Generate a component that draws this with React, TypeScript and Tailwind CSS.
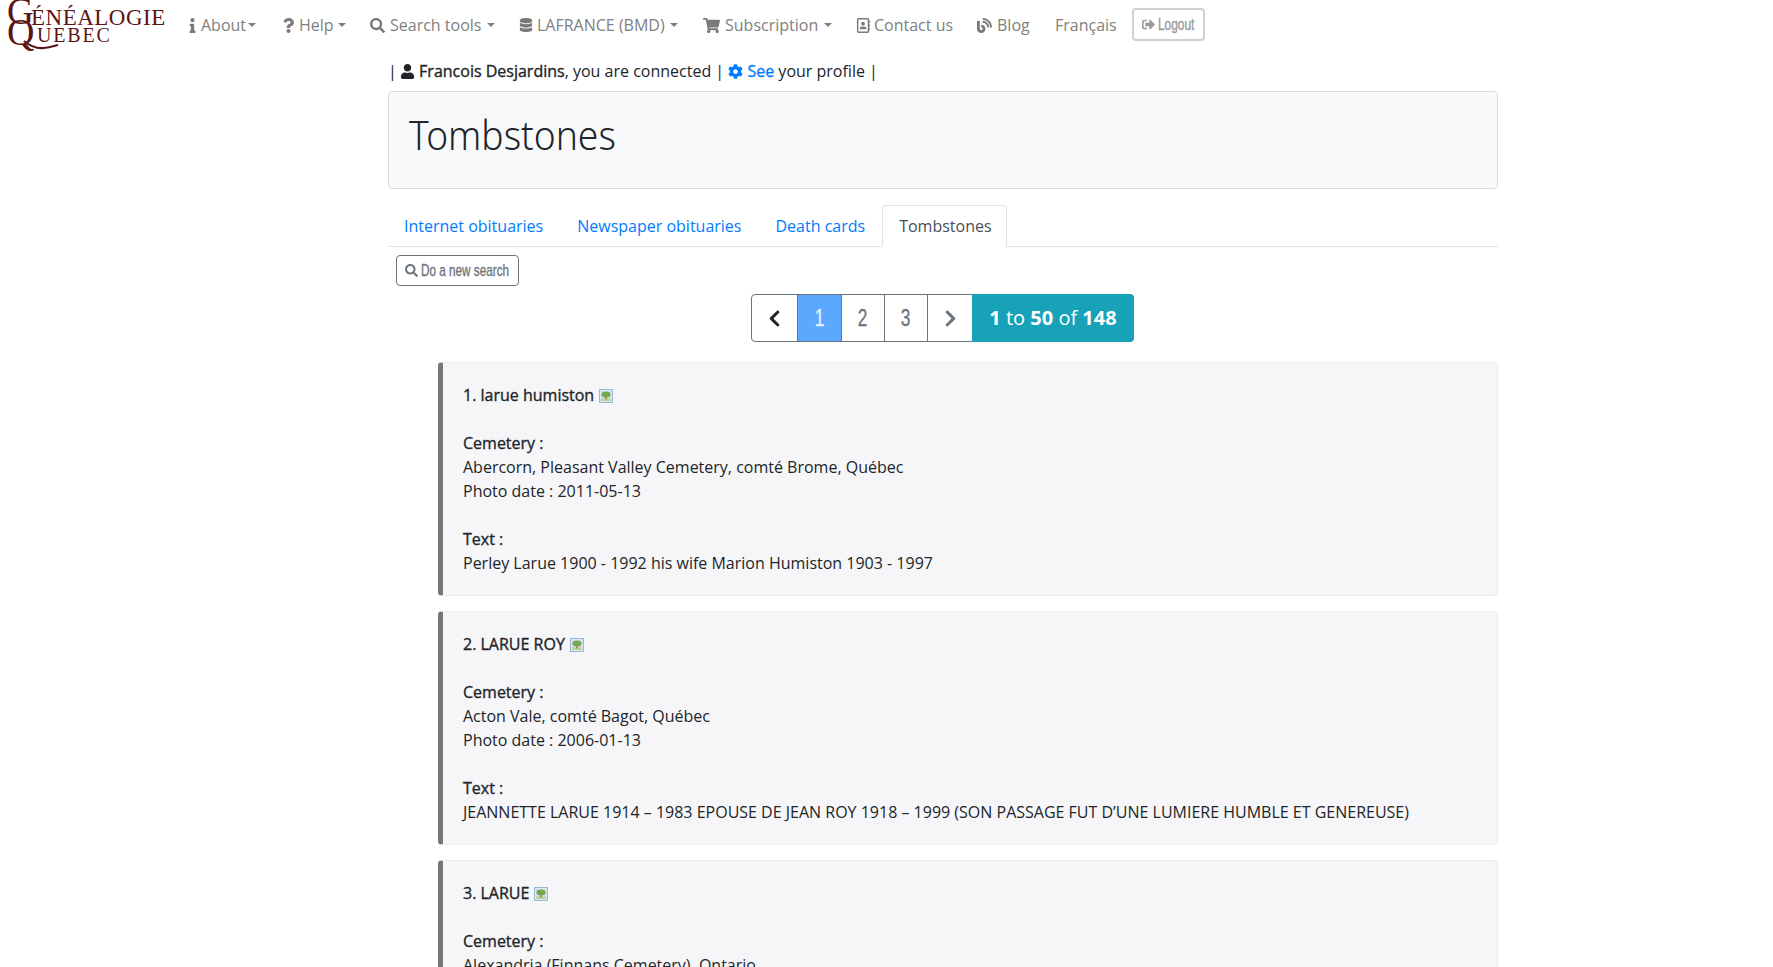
import React from "react";
import { FaInfo, FaQuestion, FaSearch, FaDatabase, FaShoppingCart, FaRegAddressBook, FaBlog, FaSignOutAlt, FaUser, FaCog, FaChevronLeft, FaChevronRight } from "react-icons/fa";

const narrow = "font-['Liberation_Sans',sans-serif]";
const semi = "[-webkit-text-stroke:0.35px_currentColor]";

function NavItem({ icon, label, caret, w, gap }: { icon?: React.ReactNode; label: string; caret?: boolean; w: string; gap: string }) {
  return (
    <div className={`${w} ${gap} mt-[2px] shrink-0 flex items-center text-[16px] text-[#808080] whitespace-nowrap`}>
      {icon && <span className="text-[#7a7a7a] flex items-center">{icon}</span>}
      <span>{label}</span>
      {caret && <span className="ml-[1px] w-0 h-0 border-x-[4.8px] border-x-transparent border-t-[4.8px] border-t-[#808080]" />}
    </div>
  );
}

function Thumb() {
  return (
    <svg width="14" height="14" viewBox="0 0 14 14" className="inline-block ml-[5px] align-[-2px]">
      <rect x="0.5" y="0.5" width="13" height="13" fill="#dde6f3" stroke="#9db6d8" />
      <rect x="2" y="2" width="10" height="10" fill="#d3dfea" />
      <rect x="2" y="9.5" width="10" height="2.5" fill="#b9d88e" />
      <rect x="6.3" y="7" width="1.5" height="3.5" fill="#a9763f" />
      <ellipse cx="7" cy="5.5" rx="4.6" ry="3" fill="#74a84f" />
    </svg>
  );
}

function Card({ n, name, cem, date, text }: { n: number; name: string; cem: string; date: string; text: string }) {
  return (
    <div className="ml-[50px] mb-[15px] h-[234px] shrink-0 bg-[#f6f6f8] border border-[#eeeeee] border-l-[5px] border-l-[#777777] rounded-[4px] pl-[20px] pt-[20px] text-[16px] leading-[24px] text-[#212529]">
      <div><span className={semi}>{n}. {name}</span><Thumb /></div>
      <div className="h-[24px]" />
      <div className={semi}>Cemetery :</div>
      <div>{cem}</div>
      <div>Photo date : {date}</div>
      <div className="h-[24px]" />
      <div className={semi}>Text :</div>
      <div>{text}</div>
    </div>
  );
}

function Page({ children, active, dark, first, w }: { children: React.ReactNode; active?: boolean; dark?: boolean; first?: boolean; w: string }) {
  return (
    <div className={`${w} flex items-center justify-center border border-[#6c757d] -ml-px first:ml-0 ${first ? "rounded-l-[4px]" : ""} ${active ? "bg-[#5aa9ff] text-[#e6f1ff] relative" : "bg-white"} ${!active && !dark ? "text-[#6c757d]" : ""} ${dark ? "text-[#212529]" : ""}`}>
      {children}
    </div>
  );
}

function Num({ c }: { c: string }) {
  return <span className={`${narrow} ${semi} text-[24px] leading-none inline-block scale-x-[0.72]`}>{c}</span>;
}

export default function App() {
  return (
    <div className="h-[967px] overflow-hidden bg-white font-['Open_Sans',sans-serif] text-[#212529]">
      <nav className="h-[48px] relative flex items-center pl-[185px]">
        <div className="absolute left-0 top-0 w-[172px] h-[56px] overflow-hidden text-[#5c1414] font-['Liberation_Serif',serif]" aria-label="Généalogie Québec">
          <span className="absolute left-[7px] -top-[10px] text-[37px] leading-[44px]">G</span>
          <span className="absolute left-[7px] top-[10px] text-[38px] leading-[44px]">Q</span>
          <svg width="60" height="56" viewBox="0 0 60 56" className="absolute left-0 top-0" fill="none">
            <path d="M24 41 C30 46 36 49 44 48 C50 47.5 54 46 58 45" stroke="#5c1414" strokeWidth="2.2" />
          </svg>
          <span className="absolute left-[31px] top-[5px] text-[23px] leading-[26px] tracking-[0.5px] whitespace-nowrap">ÉNÉALOGIE</span>
          <span className="absolute left-[37px] top-[22px] text-[20px] leading-[26px] tracking-[1.8px] whitespace-nowrap">UEBEC</span>
        </div>
        <NavItem w="w-[96px]" gap="gap-[1px]" icon={<FaInfo className="h-[15px] w-auto" />} label="About" caret />
        <NavItem w="w-[89px]" gap="gap-[3px]" icon={<FaQuestion className="h-[15px] w-auto" />} label="Help" caret />
        <NavItem w="w-[149px]" gap="gap-[5px]" icon={<FaSearch size={15} />} label="Search tools" caret />
        <NavItem w="w-[184px]" gap="gap-[4px]" icon={<FaDatabase size={14} />} label="LAFRANCE (BMD)" caret />
        <NavItem w="w-[153px]" gap="gap-[5px]" icon={<FaShoppingCart size={17} />} label="Subscription" caret />
        <NavItem w="w-[121px]" gap="gap-[3px]" icon={<FaRegAddressBook size={15} />} label="Contact us" />
        <NavItem w="w-[78px]" gap="gap-[5px]" icon={<FaBlog size={15} />} label="Blog" />
        <NavItem w="w-[77px]" gap="gap-0" label="Français" />
        <div className="h-[33px] w-[73px] mt-[1px] flex items-center pl-[8px] gap-[3px] border-2 border-[#d0d0d0] rounded-[4px] text-[#9a9a9a]">
          <FaSignOutAlt size={13} className="shrink-0" />
          <span className={`${narrow} ${semi} text-[17px] inline-block scale-x-[0.7] origin-left w-[38px] whitespace-nowrap`}>Logout</span>
        </div>
      </nav>

      <main className="ml-[388px] w-[1110px] flex flex-col">
        <div className="h-[43px] pt-[3px] text-[16px] leading-[24px] flex items-center whitespace-pre">
          <span>| </span>
          <FaUser size={15} className="-ml-[1px]" />
          <span className={semi}> Francois Desjardins</span>
          <span>, you are connected | </span>
          <FaCog size={15} className="text-[#007bff]" />
          <span className={`${semi} text-[#007bff]`}> See</span>
          <span> your profile | </span>
        </div>

        <div className="h-[98px] bg-[#f8f9fa] border border-[#dddddd] rounded-[4px] pl-[20px] pt-[19px]">
          <h1 className="text-[40px] leading-[48px] font-light font-['Noto_Sans',sans-serif] text-[#212529] inline-block scale-x-[0.93] origin-left">Tombstones</h1>
        </div>

        <div className="mt-[16px] h-[42px] flex border-b border-[#dee2e6] text-[16px]">
          <div className="px-[16px] pt-[9px] text-[#007bff]">Internet obituaries</div>
          <div className="ml-[2px] px-[16px] pt-[9px] text-[#007bff]">Newspaper obituaries</div>
          <div className="ml-[2px] px-[16px] pt-[9px] text-[#007bff]">Death cards</div>
          <div className="ml-[1px] w-[125px] pl-[16px] pt-[8px] h-[42px] bg-white border border-[#dee2e6] border-b-white rounded-t-[4px] text-[#495057]">Tombstones</div>
        </div>

        <div className="mt-[8px] ml-[8px] w-[123px] h-[31px] border border-[#6c757d] rounded-[4px] flex items-center pl-[8px] gap-[3px] text-[#6c757d]">
          <FaSearch size={13} className="shrink-0" />
          <span className={`${narrow} ${semi} text-[17px] inline-block scale-x-[0.69] origin-left w-[90px] whitespace-nowrap`}>Do a new search</span>
        </div>

        <div className="mt-[8px] h-[48px] flex ml-[363px]">
          <Page w="w-[47px]" first dark><FaChevronLeft size={19} /></Page>
          <Page w="w-[45px]" active><Num c="1" /></Page>
          <Page w="w-[44px]"><Num c="2" /></Page>
          <Page w="w-[44px]"><Num c="3" /></Page>
          <Page w="w-[46px]"><FaChevronRight size={19} /></Page>
          <div className="w-[162px] bg-[#17a2b8] rounded-r-[4px] text-white text-[20px] flex items-center justify-center -ml-px whitespace-pre">
            <b>1</b> to <b>50</b> of <b>148</b>
          </div>
        </div>

        <div className="mt-[20px] flex flex-col">
          <Card n={1} name="larue humiston" cem="Abercorn, Pleasant Valley Cemetery, comté Brome, Québec" date="2011-05-13" text="Perley Larue 1900 - 1992 his wife Marion Humiston 1903 - 1997" />
          <Card n={2} name="LARUE ROY" cem="Acton Vale, comté Bagot, Québec" date="2006-01-13" text="JEANNETTE LARUE 1914 – 1983 EPOUSE DE JEAN ROY 1918 – 1999 (SON PASSAGE FUT D’UNE LUMIERE HUMBLE ET GENEREUSE)" />
          <Card n={3} name="LARUE" cem="Alexandria (Finnans Cemetery), Ontario" date="2006-01-13" text="" />
        </div>
      </main>
    </div>
  );
}
